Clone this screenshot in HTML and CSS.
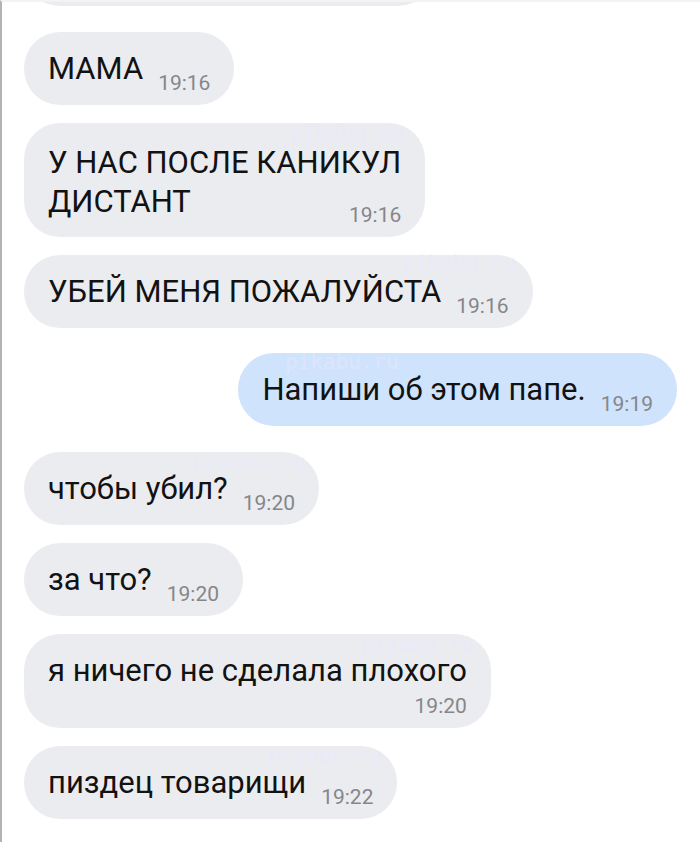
FILE: index.html
```html
<!DOCTYPE html>
<html lang="ru">
<head>
    <meta charset="UTF-8">
    <meta name="viewport" content="width=device-width, initial-scale=1.0">
    <title>Чат</title>
    <link rel="stylesheet" href="styles.css">
</head>
<body>
    <div class="chat">
        <div class="msg cut"></div>

        <div class="msg first">
            <span class="text">МАМА</span>
            <span class="time">19:16</span>
        </div>

        <div class="msg stack tight">
            <span class="text">У НАС ПОСЛЕ КАНИКУЛ<br>ДИСТАНТ</span>
            <span class="time">19:16</span>
        </div>

        <div class="msg">
            <span class="text">УБЕЙ МЕНЯ ПОЖАЛУЙСТА</span>
            <span class="time">19:16</span>
        </div>

        <div class="msg out">
            <span class="text">Напиши об этом папе.</span>
            <span class="time">19:19</span>
        </div>

        <div class="msg spaced">
            <span class="text">чтобы убил?</span>
            <span class="time">19:20</span>
        </div>

        <div class="msg">
            <span class="text">за что?</span>
            <span class="time">19:20</span>
        </div>

        <div class="msg stack">
            <span class="text">я ничего не сделала плохого</span>
            <span class="time">19:20</span>
        </div>

        <div class="msg">
            <span class="text">пиздец товарищи</span>
            <span class="time">19:22</span>
        </div>

        <!-- watermark -->
        <span class="mark m1">pikabu.ru</span>
        <span class="mark m2">pikabu.ru</span>
        <span class="mark m3">pikabu.ru</span>
        <span class="mark m4">pikabu.ru</span>
        <span class="mark m5">pikabu.ru</span>
        <span class="mark m6">pikabu.ru</span>
    </div>
</body>
</html>
```

FILE: styles.css
```css
body {
    margin: 0;
    background: #ffffff;
    border-left: 2px solid #b3b3b3;
    border-top: 2px solid #f3f3f3;
    min-height: 842px;
    box-sizing: border-box;
    font-family: Roboto, "Noto Sans", sans-serif;
    overflow: hidden;
}

.chat {
    position: relative;
    display: flex;
    flex-direction: column;
    align-items: flex-start;
    padding: 0 23px 0 22px;
}

.msg {
    display: flex;
    align-items: flex-end;
    padding: 17px 24px 11px 24px;
    margin-top: 18px;
    background: #ebecf0;
    border-radius: 36px;
}

.msg.cut {
    height: 73px;
    width: 410px;
    margin-top: -69px;
    box-sizing: border-box;
}

.msg.first {
    margin-top: 26px;
}

.msg.out {
    align-self: flex-end;
    background: #cfe3fc;
    margin-top: 25px;
}

.msg.spaced {
    margin-top: 26px;
}

.text {
    font-size: 31px;
    line-height: 39px;
    margin-bottom: 6px;
    color: #121212;
}

.time {
    font-size: 21px;
    line-height: 21px;
    margin-left: 15px;
    color: #86868a;
}

.msg.stack {
    display: block;
}

.stack .text {
    display: block;
    margin-bottom: 0;
}

.stack .time {
    display: block;
    text-align: right;
    margin: 6px 0 0 0;
}

.msg.tight {
    padding-top: 20px;
}

.tight .time {
    margin-top: -16px;
}

.mark {
    position: absolute;
    font-family: "DejaVu Sans Mono", monospace;
    font-size: 21px;
    line-height: 14px;
    color: rgba(232, 232, 255, 0.6);
    pointer-events: none;
}

.m1 { left: 288px; top: 126px; }
.m2 { left: 400px; top: 254px; }
.m3 { left: 283px; top: 353px; }
.m4 { left: 190px; top: 454px; }
.m5 { left: 358px; top: 636px; }
.m6 { left: 266px; top: 747px; }
```
